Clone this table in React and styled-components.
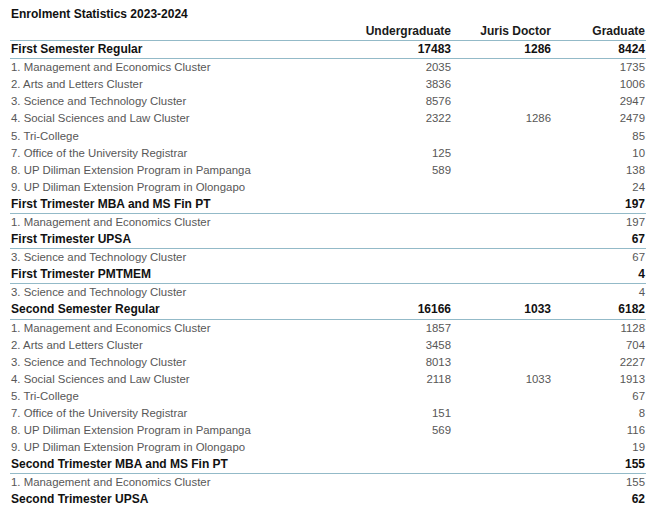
import React from "react";
import styled, { createGlobalStyle } from "styled-components";

const GlobalStyle = createGlobalStyle`
  html, body {
    margin: 0;
    padding: 0;
    background: #ffffff;
  }
  body {
    font-family: "Liberation Sans", Arial, sans-serif;
  }
`;

const Page = styled.div`
  padding: 6px 5px 0 10px;
  width: 636px;
`;

const Title = styled.h2`
  margin: 0 0 0 1px;
  font-size: 12px;
  font-weight: 700;
  line-height: 16px;
  height: 17px;
  color: #111;
`;

const Table = styled.table`
  width: 636px;
  border-collapse: collapse;
  table-layout: fixed;
`;

const HeadCell = styled.th`
  height: 17px;
  padding: 0 1px;
  font-size: 12px;
  line-height: 17px;
  font-weight: 700;
  color: #1a1a1a;
  text-align: ${(p) => (p.$left ? "left" : "right")};
  border-bottom: 1px solid #93bac8;
  white-space: nowrap;
`;

const Row = styled.tr`
  border-bottom: ${(p) => (p.$section ? "1px solid #93bac8" : "none")};
`;

const Cell = styled.td`
  height: 17.1px;
  padding: 0 1px;
  line-height: 17px;
  white-space: nowrap;
  text-align: ${(p) => (p.$left ? "left" : "right")};
  font-size: ${(p) => (p.$section ? "12px" : "11.4px")};
  font-weight: ${(p) => (p.$section ? 700 : 400)};
  color: ${(p) => (p.$section ? "#111" : "#575757")};
`;

const rows = [
  { s: true, label: "First Semester Regular", u: "17483", j: "1286", g: "8424" },
  { label: "1. Management and Economics Cluster", u: "2035", g: "1735" },
  { label: "2. Arts and Letters Cluster", u: "3836", g: "1006" },
  { label: "3. Science and Technology Cluster", u: "8576", g: "2947" },
  { label: "4. Social Sciences and Law Cluster", u: "2322", j: "1286", g: "2479" },
  { label: "5. Tri-College", g: "85" },
  { label: "7. Office of the University Registrar", u: "125", g: "10" },
  { label: "8. UP Diliman Extension Program in Pampanga", u: "589", g: "138" },
  { label: "9. UP Diliman Extension Program in Olongapo", g: "24" },
  { s: true, label: "First Trimester MBA and MS Fin PT", g: "197" },
  { label: "1. Management and Economics Cluster", g: "197" },
  { s: true, label: "First Trimester UPSA", g: "67" },
  { label: "3. Science and Technology Cluster", g: "67" },
  { s: true, label: "First Trimester PMTMEM", g: "4" },
  { label: "3. Science and Technology Cluster", g: "4" },
  { s: true, label: "Second Semester Regular", u: "16166", j: "1033", g: "6182" },
  { label: "1. Management and Economics Cluster", u: "1857", g: "1128" },
  { label: "2. Arts and Letters Cluster", u: "3458", g: "704" },
  { label: "3. Science and Technology Cluster", u: "8013", g: "2227" },
  { label: "4. Social Sciences and Law Cluster", u: "2118", j: "1033", g: "1913" },
  { label: "5. Tri-College", g: "67" },
  { label: "7. Office of the University Registrar", u: "151", g: "8" },
  { label: "8. UP Diliman Extension Program in Pampanga", u: "569", g: "116" },
  { label: "9. UP Diliman Extension Program in Olongapo", g: "19" },
  { s: true, label: "Second Trimester MBA and MS Fin PT", g: "155" },
  { label: "1. Management and Economics Cluster", g: "155" },
  { s: true, label: "Second Trimester UPSA", g: "62" },
];

export default function App() {
  return (
    <>
      <GlobalStyle />
      <Page>
        <Title>Enrolment Statistics 2023-2024</Title>
        <Table>
          <colgroup>
            <col style={{ width: 342 }} />
            <col style={{ width: 100 }} />
            <col style={{ width: 100 }} />
            <col style={{ width: 94 }} />
          </colgroup>
          <thead>
            <tr>
              <HeadCell $left></HeadCell>
              <HeadCell>Undergraduate</HeadCell>
              <HeadCell>Juris Doctor</HeadCell>
              <HeadCell>Graduate</HeadCell>
            </tr>
          </thead>
          <tbody>
            {rows.map((r, i) => (
              <Row key={i} $section={r.s}>
                <Cell $left $section={r.s}>{r.label}</Cell>
                <Cell $section={r.s}>{r.u || ""}</Cell>
                <Cell $section={r.s}>{r.j || ""}</Cell>
                <Cell $section={r.s}>{r.g || ""}</Cell>
              </Row>
            ))}
          </tbody>
        </Table>
      </Page>
    </>
  );
}
